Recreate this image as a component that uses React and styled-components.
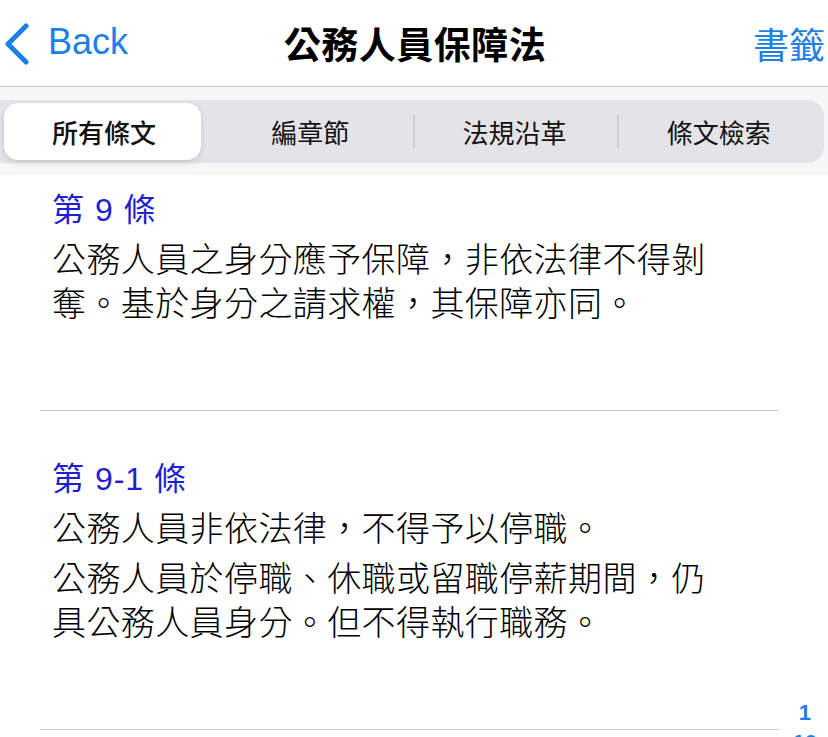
import { useLayoutEffect, useRef } from "react";
import styled, { createGlobalStyle } from "styled-components";

const GlobalStyle = createGlobalStyle`
    html, body {
        margin: 0;
        padding: 0;
        height: 100%;
        overflow: hidden;
        background: #fff;
    }
    body {
        font-family: "Liberation Sans", "Noto Sans CJK TC", sans-serif;
        -webkit-font-smoothing: antialiased;
    }
    #root {
        height: 100%;
    }
`;

const tabs = ["所有條文", "編章節", "法規沿革", "條文檢索"];

const articles = [
    {
        no: "第 9 條",
        paras: ["公務人員之身分應予保障，非依法律不得剝奪。基於身分之請求權，其保障亦同。"],
    },
    {
        no: "第 9-1 條",
        paras: [
            "公務人員非依法律，不得予以停職。",
            "公務人員於停職、休職或留職停薪期間，仍具公務人員身分。但不得執行職務。",
        ],
    },
];

const indexList = ["1", "10"];

export default function App() {
    const scrollRef = useRef(null);
    const selected = 0;

    useLayoutEffect(() => {
        if (scrollRef.current) scrollRef.current.scrollTop = 33;
    }, []);

    return (
        <Page>
            <GlobalStyle />
            <NavBar>
                <BackButton>
                    <svg width="26" height="42" viewBox="0 0 26 42">
                        <path d="M21 3 L3 21 L21 39" fill="none" stroke="#1c80e6" strokeWidth="5" strokeLinecap="round" strokeLinejoin="round" />
                    </svg>
                    <span>Back</span>
                </BackButton>
                <NavTitle>公務人員保障法</NavTitle>
                <NavAction>書籤</NavAction>
            </NavBar>
            <SegmentBand>
                <Segmented>
                    {tabs.map((t, i) => (
                        <Segment key={t} $active={i === selected} $divider={i > selected + 1}>
                            {t}
                        </Segment>
                    ))}
                </Segmented>
            </SegmentBand>
            <Content ref={scrollRef}>
                {articles.map((a) => (
                    <Article key={a.no}>
                        <ArticleNo>{a.no}</ArticleNo>
                        {a.paras.map((p, i) => (
                            <Para key={i}>{p}</Para>
                        ))}
                    </Article>
                ))}
            </Content>
            <SectionIndex>
                {indexList.map((n) => (
                    <IndexItem key={n}>{n}</IndexItem>
                ))}
            </SectionIndex>
        </Page>
    );
}

const Page = styled.div`
    position: relative;
    height: 100%;
    display: flex;
    flex-direction: column;
    overflow: hidden;
`;

const NavBar = styled.div`
    height: 86px;
    flex-shrink: 0;
    display: grid;
    grid-template-columns: 1fr auto 1fr;
    align-items: center;
    border-bottom: 1px solid #c4c4c6;
    background: #fff;
    padding: 0 3px 0 5px;
`;

const BackButton = styled.div`
    display: flex;
    align-items: center;
    gap: 17px;
    color: #1c80e6;
    font-size: 36px;
    margin-top: 1px;

    span {
        margin-top: -3px;
    }
`;

const NavTitle = styled.div`
    font-family: "Noto Sans CJK TC", sans-serif;
    font-weight: 700;
    font-size: 37px;
    color: #000;
    letter-spacing: 0.5px;
`;

const NavAction = styled.div`
    justify-self: end;
    font-family: "Noto Sans CJK TC", sans-serif;
    font-size: 36px;
    color: #1c80e6;
`;

const SegmentBand = styled.div`
    flex-shrink: 0;
    background: #f7f7f7;
    padding: 13px 4px 12px 0;
`;

const Segmented = styled.div`
    height: 63px;
    display: grid;
    grid-template-columns: repeat(4, 1fr);
    background: #e4e4e8;
    border-radius: 0 16px 16px 0;
    padding: 3px 3px 3px 4px;
    box-sizing: border-box;
`;

const Segment = styled.div`
    position: relative;
    display: flex;
    align-items: center;
    justify-content: center;
    font-family: "Noto Sans CJK TC", sans-serif;
    font-size: 26px;
    font-weight: ${(p) => (p.$active ? 500 : 400)};
    color: #111;
    border-radius: 14px;
    background: ${(p) => (p.$active ? "#fff" : "transparent")};
    box-shadow: ${(p) => (p.$active ? "0 3px 6px rgba(0,0,0,0.12), 0 0 1px rgba(0,0,0,0.1)" : "none")};
    margin-right: ${(p) => (p.$active ? "7px" : "0")};
    padding-left: ${(p) => (p.$active ? "3px" : "0")};

    &::before {
        content: "";
        display: ${(p) => (p.$divider ? "block" : "none")};
        position: absolute;
        left: 0;
        top: 12px;
        bottom: 12px;
        width: 2px;
        background: #cfcfd3;
    }
`;

const Content = styled.div`
    flex: 1;
    overflow: hidden;
    padding-bottom: 120px;
`;

const Article = styled.div`
    margin: 0 50px 0 40px;
    padding: 46px 0 86px 12px;
    border-bottom: 1px solid #c8c8c8;
`;

const ArticleNo = styled.div`
    font-family: "Liberation Sans", "Noto Sans CJK TC", sans-serif;
    font-size: 32px;
    line-height: 44px;
    letter-spacing: 1px;
    color: #1e1ed2;
    margin-bottom: 4px;
`;

const Para = styled.p`
    margin: 0 0 6px;
    width: 672px;
    font-family: "Noto Sans CJK TC", sans-serif;
    font-size: 34px;
    font-weight: 300;
    line-height: 44px;
    letter-spacing: 0.4px;
    color: #000;

    &:last-child {
        margin-bottom: 0;
    }
`;

const SectionIndex = styled.div`
    position: absolute;
    right: 11px;
    top: 698px;
    display: flex;
    flex-direction: column;
    align-items: center;
`;

const IndexItem = styled.div`
    font-family: "Liberation Sans", sans-serif;
    font-weight: 700;
    font-size: 22px;
    line-height: 30px;
    color: #1c80e6;
`;
